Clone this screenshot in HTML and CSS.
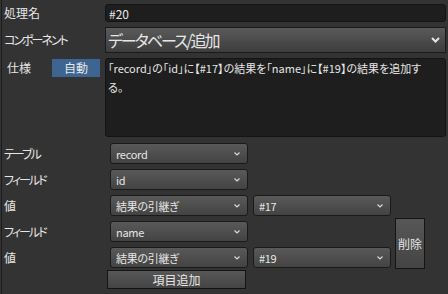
FILE: index.html
```html
<!DOCTYPE html>
<html lang="ja">
<head>
  <meta charset="UTF-8">
  <title>処理設定</title>
  <link rel="stylesheet" href="styles.css">
</head>
<body>
  <div class="panel">
    <div class="head">
      <div class="label">処理名</div>
      <div class="text-input">#20</div>

      <div class="label kana">コンポーネント</div>
      <div class="select big">
        <span>データベース/追加</span>
        <svg class="chev" width="9" height="6" viewBox="0 0 9 6"><polyline points="1,1 4.5,4.5 8,1" fill="none" stroke="#e6e6e6" stroke-width="2"/></svg>
      </div>

      <div class="label spec-label">
        <span class="spec-name">仕様</span>
        <span class="badge">自動</span>
      </div>
      <div class="spec-text">「record」の「id」に【#17】の結果を「name」に【#19】の結果を追加する。</div>
    </div>

    <div class="fields">
      <div class="label kana">テーブル</div>
      <div class="select"><span>record</span><svg class="chev" width="6" height="4" viewBox="0 0 6 4"><polyline points="0.5,0.5 3,3 5.5,0.5" fill="none" stroke="#d8d8d8" stroke-width="1.2"/></svg></div>
      <div></div><div></div>

      <div class="label kana">フィールド</div>
      <div class="select"><span>id</span><svg class="chev" width="6" height="4" viewBox="0 0 6 4"><polyline points="0.5,0.5 3,3 5.5,0.5" fill="none" stroke="#d8d8d8" stroke-width="1.2"/></svg></div>
      <div></div><div></div>

      <div class="label">値</div>
      <div class="select"><span>結果の引継ぎ</span><svg class="chev" width="6" height="4" viewBox="0 0 6 4"><polyline points="0.5,0.5 3,3 5.5,0.5" fill="none" stroke="#d8d8d8" stroke-width="1.2"/></svg></div>
      <div class="select"><span>#17</span><svg class="chev" width="6" height="4" viewBox="0 0 6 4"><polyline points="0.5,0.5 3,3 5.5,0.5" fill="none" stroke="#d8d8d8" stroke-width="1.2"/></svg></div>
      <div></div>

      <div class="label kana">フィールド</div>
      <div class="select"><span>name</span><svg class="chev" width="6" height="4" viewBox="0 0 6 4"><polyline points="0.5,0.5 3,3 5.5,0.5" fill="none" stroke="#d8d8d8" stroke-width="1.2"/></svg></div>
      <div></div>
      <button class="btn delete">削除</button>

      <div class="label">値</div>
      <div class="select"><span>結果の引継ぎ</span><svg class="chev" width="6" height="4" viewBox="0 0 6 4"><polyline points="0.5,0.5 3,3 5.5,0.5" fill="none" stroke="#d8d8d8" stroke-width="1.2"/></svg></div>
      <div class="select"><span>#19</span><svg class="chev" width="6" height="4" viewBox="0 0 6 4"><polyline points="0.5,0.5 3,3 5.5,0.5" fill="none" stroke="#d8d8d8" stroke-width="1.2"/></svg></div>
    </div>
    <button class="btn add">項目追加</button>
  </div>
</body>
</html>
```

FILE: styles.css
```css
body {
  margin: 0; padding: 0;
  background: #333333;
  color: #e6e6e6;
  font-family: "Noto Sans CJK JP", "Noto Sans", sans-serif;
  font-size: 12px;
  font-feature-settings: "palt";
  height: 294px; overflow: hidden;
}
.panel {
  margin-left: 1px;
  border-left: 1px solid #1c1c1c;
  padding: 4px 2px 0 2px;
  height: 294px; box-sizing: border-box;
}
.head {
  display: grid;
  grid-template-columns: 101px 341px;
  grid-template-rows: 18px 26px 79px;
  row-gap: 5px;
}
.label { display: flex; align-items: center; line-height: 1; white-space: nowrap; }
.label.kana { letter-spacing: -2px; }
.spec-label { align-items: flex-start; padding-top: 1px; }
.spec-name { margin-left: 3px; margin-top: 3px; width: 45px; }
.badge {
  width: 48px; height: 18px;
  background: #3e6591; color: #e8e8e8;
  display: flex; align-items: center; justify-content: center;
}
.text-input {
  background: #1e1e1e; border: 1px solid #141414; border-radius: 3px;
  padding: 0 3px; display: flex; align-items: center;
  font-size: 12px;
}
.spec-text {
  background: #1e1e1e; border: 1px solid #141414; border-radius: 3px;
  padding: 0 12px 0 2px; font-size: 11px; line-height: 19px;
}
.select {
  background: linear-gradient(#595959, #434343);
  border: 1px solid #1a1a1a; border-radius: 3px;
  display: flex; align-items: center; justify-content: space-between;
  padding: 0 7px 0 5px; font-size: 11px; letter-spacing: -0.3px;
  box-sizing: border-box; white-space: nowrap;
}
.select.big {
  background: linear-gradient(#5a5a5a, #3d3d3d);
  font-size: 16px; letter-spacing: -2px; padding: 0 5px 0 2px;
  border-radius: 0;
}
.fields {
  display: grid;
  grid-template-columns: 101px 138px 138px 29px;
  grid-auto-rows: 21px;
  column-gap: 5px; row-gap: 5px;
  margin-top: 6px;
}
.btn {
  font-family: inherit; font-feature-settings: "palt";
  background: linear-gradient(#575757, #444444);
  border: 1px solid #141414; border-radius: 0;
  color: #e6e6e6; font-size: 12px; padding: 0;
}
.delete { grid-row: span 2; margin: -3px 0 -1px -1px; }
.add { display: block; margin: 2px 0 0 103px; width: 139px; height: 19px; }
```
